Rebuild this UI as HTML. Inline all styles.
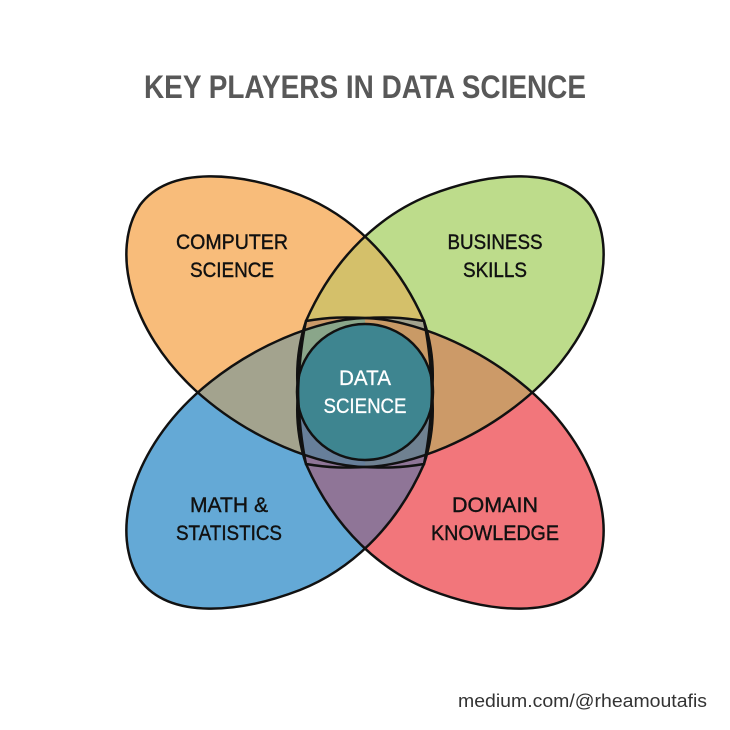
<!DOCTYPE html>
<html><head><meta charset="utf-8"><style>
html,body{margin:0;padding:0;background:#fff;width:730px;height:730px;overflow:hidden}
svg{display:block}
text{font-family:"Liberation Sans",sans-serif}
</style></head><body>
<svg width="730" height="730" viewBox="0 0 730 730">
<defs>
<path id="po" d="M424,464 C400,468 385,468 365,467 C320,466 250,440 195,390 C130,330 110,250 140,205 C170,165 240,172 300,195 C348,214 395,255 424,321 C432,345 434,370 432,392 C431,420 428,445 424,464 Z"/>
<clipPath id="co"><use href="#po"/></clipPath>
<clipPath id="cg"><use href="#po" transform="matrix(-1 0 0 1 730 0)"/></clipPath>
<clipPath id="cb"><use href="#po" transform="matrix(1 0 0 -1 0 785)"/></clipPath>
<clipPath id="cr"><use href="#po" transform="matrix(-1 0 0 -1 730 785)"/></clipPath>
</defs>
<text x="365" y="98" text-anchor="middle" font-size="32" font-weight="bold" fill="#585858" textLength="442" lengthAdjust="spacingAndGlyphs">KEY PLAYERS IN DATA SCIENCE</text>
<use href="#po" fill="#f8bc7a"/>
<use href="#po" transform="matrix(-1 0 0 1 730 0)" fill="#bddc8b"/>
<use href="#po" transform="matrix(1 0 0 -1 0 785)" fill="#64a9d6"/>
<use href="#po" transform="matrix(-1 0 0 -1 730 785)" fill="#f2767b"/>
<g clip-path="url(#co)">
 <g clip-path="url(#cg)"><rect width="730" height="730" fill="#d4c06a"/></g>
 <g clip-path="url(#cb)"><rect width="730" height="730" fill="#a3a38e"/></g>
</g>
<g clip-path="url(#cg)"><g clip-path="url(#cr)"><rect width="730" height="730" fill="#cc9a68"/></g></g>
<g clip-path="url(#cb)"><g clip-path="url(#cr)"><rect width="730" height="730" fill="#8f7597"/></g></g>
<g clip-path="url(#co)"><g clip-path="url(#cb)"><g clip-path="url(#cg)"><g clip-path="url(#cr)">
 <rect x="0" y="0" width="365" height="392" fill="#8aa68a"/>
 <rect x="365" y="0" width="365" height="392" fill="#c99a66"/>
 <rect x="0" y="392" width="365" height="338" fill="#677f9a"/>
 <rect x="365" y="392" width="365" height="338" fill="#6f8191"/>
</g></g></g></g>
<circle cx="365" cy="392" r="68" fill="#3e8590"/>
<g fill="none" stroke="#111" stroke-width="2.5">
<use href="#po"/>
<use href="#po" transform="matrix(-1 0 0 1 730 0)"/>
<use href="#po" transform="matrix(1 0 0 -1 0 785)"/>
<use href="#po" transform="matrix(-1 0 0 -1 730 785)"/>
<circle cx="365" cy="392" r="68"/>
</g>
<g font-size="21" fill="#111" text-anchor="middle" stroke="#111" stroke-width="0.4">
<text x="232" y="249" textLength="112" lengthAdjust="spacingAndGlyphs">COMPUTER</text>
<text x="232" y="277" textLength="84" lengthAdjust="spacingAndGlyphs">SCIENCE</text>
<text x="495" y="249" textLength="95" lengthAdjust="spacingAndGlyphs">BUSINESS</text>
<text x="495" y="277" textLength="64" lengthAdjust="spacingAndGlyphs">SKILLS</text>
<text x="229" y="512" textLength="78" lengthAdjust="spacingAndGlyphs">MATH &amp;</text>
<text x="229" y="540" textLength="106" lengthAdjust="spacingAndGlyphs">STATISTICS</text>
<text x="495" y="512" textLength="86" lengthAdjust="spacingAndGlyphs">DOMAIN</text>
<text x="495" y="540" textLength="128" lengthAdjust="spacingAndGlyphs">KNOWLEDGE</text>
<text x="365" y="385" fill="#fff" stroke="#fff" stroke-width="0.3" textLength="52" lengthAdjust="spacingAndGlyphs">DATA</text>
<text x="365" y="413" fill="#fff" stroke="#fff" stroke-width="0.3" textLength="83" lengthAdjust="spacingAndGlyphs">SCIENCE</text>
</g>
<text x="707" y="707" text-anchor="end" font-size="18" fill="#333" textLength="249" lengthAdjust="spacingAndGlyphs">medium.com/@rheamoutafis</text>
</svg>
</body></html>
